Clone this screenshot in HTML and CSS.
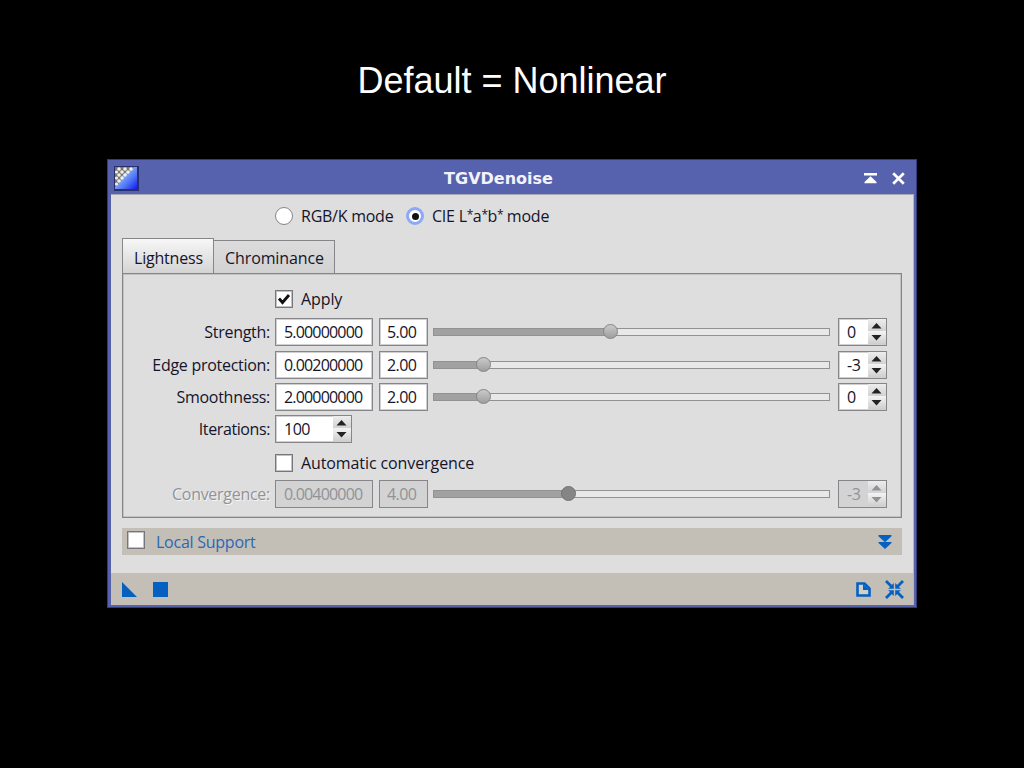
FILE: index.html
```html
<!DOCTYPE html>
<html lang="en">
<head>
<meta charset="utf-8">
<title>TGVDenoise</title>
<link rel="stylesheet" href="styles.css">
</head>
<body>
<h1 class="heading">Default = Nonlinear</h1>
<main class="window">
  <header class="titlebar">
    <svg class="app-icon" width="25" height="25" viewBox="0 0 25 25">
      <defs>
        <linearGradient id="blue" x1="0" y1="0" x2="1" y2="1"><stop offset="0" stop-color="#fff"/><stop offset=".35" stop-color="#8fb0f2"/><stop offset=".65" stop-color="#4f78f5"/><stop offset="1" stop-color="#1018f0"/></linearGradient>
      </defs>
      <rect width="25" height="25" fill="#27306b"/>
      <rect x="1" y="1" width="22" height="22" fill="url(#blue)"/>
      <path d="M1 1h19l-3 3-5 2-4 4-2 6-5 5z" fill="#77776f"/>
      <g fill="#f0f0e8"><circle cx="5" cy="3" r="1.8"/><circle cx="11" cy="3" r="1.8"/><circle cx="17" cy="3" r="1.8"/><circle cx="2.500" cy="6" r="1.6"/><circle cx="8" cy="6" r="1.8"/><circle cx="14" cy="6" r="1.8"/><circle cx="5" cy="9" r="1.8"/><circle cx="11" cy="9" r="1.8"/><circle cx="2.500" cy="12" r="1.6"/><circle cx="8" cy="12" r="1.8"/><circle cx="5" cy="15" r="1.8"/><circle cx="2.500" cy="18" r="1.6"/></g>
    </svg>
    <span class="title">TGVDenoise</span>
    <svg class="shade" width="13" height="11" viewBox="0 0 13 11" fill="#fff"><path d="M0 0h13v2.5H0zM6.5 3.2L12.5 9v1.2H.5V9z"/></svg>
    <svg class="close" width="13" height="13" viewBox="0 0 13 13"><path d="M1.2 1.2l10.6 10.6M11.8 1.2L1.2 11.8" stroke="#fff" stroke-width="2.7"/></svg>
  </header>
  <section class="content">
    <div class="modes">
      <i class="radio"></i><span class="t rgb">RGB/K mode</span>
      <i class="radio on"></i><span class="t cie">CIE L<span class="star">*</span>a<span class="star">*</span>b<span class="star">*</span> mode</span>
    </div>
    <nav class="tabs"><div class="tab active"><span class="t light">Lightness</span></div><div class="tab"><span class="t chrom">Chrominance</span></div></nav>
    <div class="panel">
      <div class="checkrow apply"><i class="check"><svg width="16" height="16" viewBox="0 0 16 16"><path d="M3 7.500l3.500 4L13 4" fill="none" stroke="#111" stroke-width="2.8"/></svg></i><span class="t ap">Apply</span></div>
      <div class="row strength"><label class="t">Strength:</label><div class="field wide">5.00000000</div><div class="field short">5.00</div><div class="slider"><i class="fill" style="width:177px"></i><i class="knob"></i></div><div class="spin"><b>0</b><i class="arrows"><svg width="17" height="25" viewBox="0 0 17 25"><path d="M3.5 9.500l5-5.500 5 5.500zM3.5 16l5 5.500 5-5.500z"/></svg></i></div></div>
      <div class="row edge"><label class="t">Edge protection:</label><div class="field wide">0.00200000</div><div class="field short">2.00</div><div class="slider"><i class="fill" style="width:50px"></i><i class="knob"></i></div><div class="spin"><b>-3</b><i class="arrows"><svg width="17" height="25" viewBox="0 0 17 25"><path d="M3.5 9.500l5-5.500 5 5.500zM3.5 16l5 5.500 5-5.500z"/></svg></i></div></div>
      <div class="row smooth"><label class="t">Smoothness:</label><div class="field wide">2.00000000</div><div class="field short">2.00</div><div class="slider"><i class="fill" style="width:50px"></i><i class="knob"></i></div><div class="spin"><b>0</b><i class="arrows"><svg width="17" height="25" viewBox="0 0 17 25"><path d="M3.5 9.500l5-5.500 5 5.500zM3.5 16l5 5.500 5-5.500z"/></svg></i></div></div>
      <div class="row iter"><label class="t">Iterations:</label><div class="spin iterspin"><b>100</b><i class="arrows"><svg width="17" height="25" viewBox="0 0 17 25"><path d="M3.5 9.500l5-5.500 5 5.500zM3.5 16l5 5.500 5-5.500z"/></svg></i></div></div>
      <div class="checkrow auto"><i class="check"></i><span class="t au">Automatic convergence</span></div>
      <div class="row disabled"><label class="t">Convergence:</label><div class="field wide">0.00400000</div><div class="field short">4.00</div><div class="slider"><i class="fill" style="width:135px"></i><i class="knob"></i></div><div class="spin"><b>-3</b><i class="arrows"><svg width="17" height="25" viewBox="0 0 17 25"><path d="M3.5 9.500l5-5.500 5 5.500zM3.5 16l5 5.500 5-5.500z"/></svg></i></div></div>
    </div>
    <div class="local"><i class="check"></i><span class="t ls">Local Support</span><svg class="expand" width="14" height="14" viewBox="0 0 14 14" fill="#0560c0"><path d="M.5 0h13v1.200L7 7.300.5 1.200zM.5 7h13v1L7 14 .5 8z"/></svg></div>
  </section>
  <footer class="footer">
    <svg width="15" height="15" viewBox="0 0 15 15" fill="#0560c0"><path d="M0 0l15 15H0z"/></svg>
    <svg class="square" width="15" height="15" viewBox="0 0 15 15"><path fill="#0560c0" d="M0 0h15v15H0z"/></svg>
    <svg class="doc" width="15" height="15" viewBox="0 0 15 15"><path d="M1.500 1.500H8.500l5 5v7h-12z" fill="#d3d0ca" stroke="#0560c0" stroke-width="2.6"/><path d="M7 2l6.500 6H7z" fill="#0560c0"/></svg>
    <svg class="reset" width="19" height="19" viewBox="0 0 19 19" fill="#0560c0"><path d="M1 1l6 6M18 1l-6 6M1 18l6-6M18 18l-6-6" fill="none" stroke="#0560c0" stroke-width="2.8"/><path d="M8.800 3v5.800H3l2.500-2h1.300V5zM10.200 3v5.800H16l-2.500-2h-1.300V5zM8.800 16v-5.800H3l2.500 2h1.300V14zM10.200 16v-5.800H16l-2.500 2h-1.300V14z"/></svg>
  </footer>
</main>
</body>
</html>
```
FILE: styles.css
```css
* { box-sizing: border-box; }
body { margin: 0; width: 1024px; height: 768px; overflow: hidden; background: #000; color: #14142b; font: 16px/20px "Open Sans", "Noto Sans", sans-serif; }
i { font-style: normal; display: block; flex: none; }
b { font-weight: normal; }
svg { display: block; flex: none; }
.heading { margin: 0; height: 159px; padding-top: 59px; text-align: center; color: #fff; font: 36px/44px "Liberation Sans", Arial, sans-serif; }
.window { width: 810px; height: 449px; margin-left: 107px; border: 1px solid #343b78; background: #5762ae; padding: 0 2px 3px 3px; }
.titlebar { height: 34px; display: flex; align-items: center; padding: 2px 9px 0 3px; }
.title { flex: 1; text-align: center; color: #f4f2fa; font: 700 16px/20px "DejaVu Sans", sans-serif; letter-spacing: 0; padding: 2px 6px 0 0; }
.shade { margin-right: 15px; }
.content { height: 379px; border-top: 1px solid #a9a9b6; border-right: 1px solid #a4b2ef; background: #dededf; padding: 12px 11px 0 11px; }
.t { white-space: nowrap; display: block; letter-spacing: -.100px; }
.modes { display: flex; align-items: center; height: 18px; padding-left: 153px; }
.radio { width: 18px; height: 18px; border: 1.500px solid #86868a; border-radius: 50%; background: #fff; }
.radio.on { border: 3px solid #8ba9f4; display: grid; place-items: center; }
.radio.on::after { content: ""; width: 7px; height: 7px; border-radius: 50%; background: #111; }
.rgb { width: 92px; margin-left: 8px; margin-right: 13px; letter-spacing: -.250px; }
.cie { margin-left: 8px; letter-spacing: -.220px; }
.star { font-size: 12px; line-height: 1; vertical-align: 3px; letter-spacing: -.700px; }
.tabs { display: flex; align-items: flex-end; height: 35px; margin-top: 13px; }
.tab { height: 33px; width: 121px; border: solid #85858a; border-width: 1.500px 1.500px 0 0; background: linear-gradient(#dcdcdc, #d2d2d3); padding: 7px 0 0 11px; }
.tab.active { height: 35px; width: 92px; border-left-width: 1px; background: linear-gradient(#f7f7f7, #d4d4d5); padding-top: 9px; }
.light { letter-spacing: -.200px; }
.panel { width: 780px; height: 245px; border: 1px solid #85858a; box-shadow: inset 0 0 0 .500px #a5a5a8; padding-top: 16px; }
.checkrow { display: flex; align-items: center; height: 18px; padding-left: 152px; gap: 8px; }
.check { width: 18px; height: 18px; border: 1px solid #77777b; box-shadow: inset 0 0 0 1px #c2c2c4; background: #fff; }
.row { height: 27px; display: flex; align-items: center; margin-top: 5px; }
.row label { width: 147px; margin-right: 5px; display: flex; justify-content: flex-end; letter-spacing: -.280px; }
.row.iter label { letter-spacing: -.400px; }
.strength { margin-top: 10px; }
.edge { margin-top: 6px; }
.auto { margin-top: 12px; }
.disabled { margin-top: 8px; }
.field, .spin { height: 28px; border: 1.500px solid #85858a; box-shadow: inset 0 0 0 1px #d0d0d2; background: #fff; line-height: 26px; }
.field { width: 98px; padding-left: 8px; margin-right: 6px; letter-spacing: -.820px; }
.short { width: 49px; margin-right: 5px; padding-left: 7px; letter-spacing: -.600px; }
.slider { width: 397px; height: 8px; border: 1.500px solid #929295; background: #e8e8e9; display: flex; align-items: center; margin-right: 8px; }
.fill { height: 6px; background: #a1a1a2; }
.knob { width: 15px; height: 15px; border-radius: 50%; border: 1.500px solid #858587; background: linear-gradient(#cacaca, #9e9e9e); margin-left: -8px; }
.spin { width: 49px; display: flex; align-items: center; padding-left: 8px; }
.spin b { flex: 1; letter-spacing: -.500px; }
.arrows { width: 18px; height: 25px; background: linear-gradient(#ededed, #d2d2d3 49%, #f3f3f3 50%, #cececf); fill: #222; }
.iterspin { width: 77px; }
.disabled label, .disabled .field, .disabled .spin { color: #929297; }
.disabled label { text-shadow: 1px 1px #f5f5f5; }
.disabled .field, .disabled .spin { background: #d3d3d4; box-shadow: none; }
.disabled .knob { background: #858586; border-color: #727275; }
.disabled .arrows { fill: #929296; }
.local { width: 780px; height: 27px; margin-top: 10px; background: #c3bfb7; display: flex; align-items: center; padding: 0 10px 0 5px; }
.local .check { margin-top: -3px; }
.ls { color: #2b67b5; margin-left: 11px; flex: 1; letter-spacing: -.250px; }
.footer { height: 32px; border-right: 1px solid #a4b2ef; background: #c3bfb7; display: flex; align-items: center; padding: 0 9px 0 11px; }
.square { margin-left: 16px; }
.doc { margin-left: auto; margin-right: 14px; }
```
